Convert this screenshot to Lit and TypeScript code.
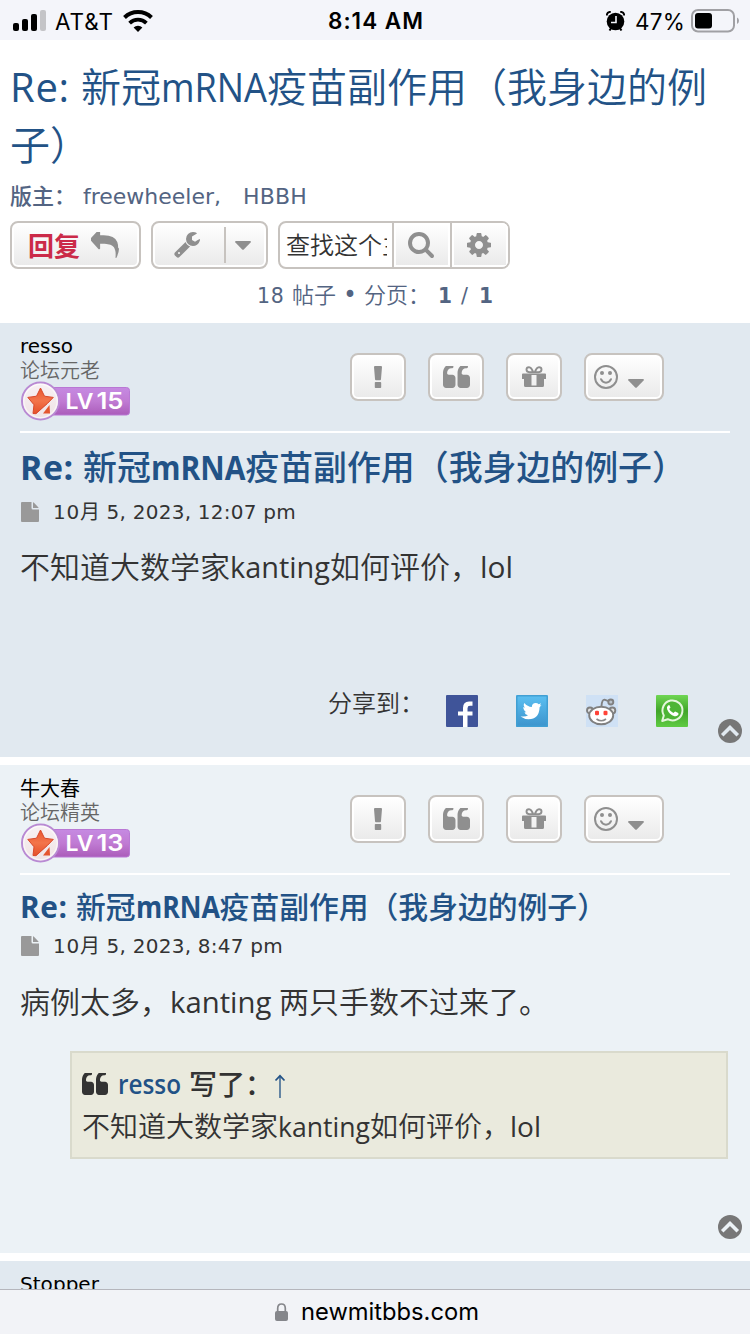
import { LitElement, html, css, svg, nothing } from "lit";
import { customElement, property, query } from "lit/decorators.js";

const QUOTE =
  "M832 960v384q0 80-56 136t-136 56h-384q-80 0-136-56t-56-136v-704q0-104 40.5-198.5t109.5-163.5 163.5-109.5 198.5-40.5h64q26 0 45 19t19 45v128q0 26-19 45t-45 19h-64q-106 0-181 75t-75 181v32q0 40 28 68t68 28h224q80 0 136 56t56 136zm896 0v384q0 80-56 136t-136 56h-384q-80 0-136-56t-56-136v-704q0-104 40.5-198.5t109.5-163.5 163.5-109.5 198.5-40.5h64q26 0 45 19t19 45v128q0 26-19 45t-45 19h-64q-106 0-181 75t-75 181v32q0 40 28 68t68 28h224q80 0 136 56t56 136z";
const GEAR =
  "M1152 896q0-106-75-181t-181-75-181 75-75 181 75 181 181 75 181-75 75-181zm512-109v222q0 12-8 23t-20 13l-185 28q-19 54-39 91 35 50 107 138 10 12 10 25t-9 23q-27 37-99 108t-94 71q-12 0-26-9l-138-108q-44 23-91 38-16 136-29 186-7 28-36 28h-222q-14 0-24.5-8.5t-11.5-21.5l-28-184q-49-16-90-37l-141 107q-10 9-25 9-14 0-25-11-126-114-165-168-7-10-7-23 0-12 8-23 15-21 51-66.5t54-70.5q-27-50-41-99l-183-27q-13-2-21-12.5t-8-23.5v-222q0-12 8-23t19-13l186-28q14-46 39-92-40-57-107-138-10-12-10-24 0-10 9-23 26-36 98.5-107.5t94.5-71.5q13 0 26 10l138 107q44-23 91-38 16-136 29-186 7-28 36-28h222q14 0 24.5 8.5t11.5 21.5l28 184q49 16 90 37l142-107q9-9 24-9 13 0 25 10 129 119 165 170 7 8 7 22 0 12-8 23-15 21-51 66.5t-54 70.5q26 50 41 98l183 28q13 2 21 12.5t8 23.5z";
const SEARCH =
  "M1216 832q0-185-131.5-316.5t-316.5-131.5-316.5 131.5-131.5 316.5 131.5 316.5 316.5 131.5 316.5-131.5 131.5-316.5zm512 832q0 52-38 90t-90 38q-54 0-90-38l-343-342q-179 124-399 124-143 0-273.5-55.5t-225-150-150-225-55.5-273.5 55.5-273.5 150-225 225-150 273.5-55.5 273.5 55.5 225 150 150 225 55.5 273.5q0 220-124 399l343 343q37 37 37 90z";
const WRENCH =
  "M448 1472q0-26-19-45t-45-19-45 19-19 45 19 45 45 19 45-19 19-45zm644-420l-682 682q-37 37-90 37-52 0-91-37l-106-108q-38-36-38-90 0-53 38-91l681-681q39 98 114.5 173.5t173.5 114.5zm634-435q0 39-23 106-47 134-164.5 217.5t-258.5 83.5q-185 0-316.5-131.5t-131.5-316.5 131.5-316.5 316.5-131.5q58 0 121.5 16.5t107.5 46.5q16 11 16 28t-16 28l-293 169v224l193 107q5-3 79-48.5t135.5-81 70.5-35.5q15 0 23.5 10t8.5 25z";
const REPLY =
  "M1792 1120q0 166-127 451-3 7-10.5 24t-13.5 30-13 22q-12 17-28 17-15 0-23.5-10t-8.5-25q0-9 2.5-26.5t2.5-23.5q5-68 5-123 0-112-19.5-200.5t-54-153.5-89-112-113-80-144.5-48-164.5-28.5-186.5-8.5h-224v256q0 26-19 45t-45 19-45-19l-512-512q-19-19-19-45t19-45l512-512q19-19 45-19t45 19 19 45v256h224q713 0 875 403 53 134 53 333z";

const glyph = (d: string, w: number, h: number, box = "0 0 1792 1792") =>
  html`<svg width=${w} height=${h} viewBox=${box} preserveAspectRatio="none" fill="currentColor"><path d=${d} /></svg>`;

const caret = html`<svg width="16" height="9" viewBox="0 0 16 9" fill="currentColor"><path d="M.9 0h14.2q1.2.3.5 1.400L8.800 8.500q-.8.700-1.600 0L.4 1.400Q-.3.300.9 0z" /></svg>`;

/* A stretch of Latin text fitted to a given advance width:
   condensed when it is naturally wider, tracked when it is narrower. */
@customElement("text-run")
class TextRun extends LitElement {
  static styles = css`
    :host { display: inline-block; white-space: pre; }
    .inner { display: inline-block; white-space: pre; transform-origin: 0 50%; }
  `;
  @property({ type: Number }) w = 0;
  @property() text = "";
  @query(".inner") inner!: HTMLElement;
  firstUpdated() {
    const natural = this.inner.getBoundingClientRect().width;
    if (natural > this.w) {
      this.inner.style.transform = `scaleX(${(this.w / natural).toFixed(4)})`;
      this.inner.style.marginRight = `${(this.w - natural).toFixed(3)}px`;
    } else {
      this.inner.style.letterSpacing = `${((this.w - natural) / this.text.length).toFixed(3)}px`;
    }
  }
  render() {
    return html`<span class="inner">${this.text}</span>`;
  }
}

const run = (text: string, w: number) => html`<text-run .text=${text} .w=${w}></text-run>`;

@customElement("level-badge")
class LevelBadge extends LitElement {
  static styles = css`
    :host { display: block; width: 112px; height: 40px; }
    svg { display: block; }
    text { font: 600 23px Inter, "Liberation Sans", sans-serif; }
    .lv { font-size: 22px; font-weight: 600; }
  `;
  @property({ type: Number }) level = 1;
  render() {
    return html`<svg width="112" height="40" viewBox="0 0 112 40">
      <defs>
        <linearGradient id="bar" x2="0" y2="1"><stop offset="0" stop-color="#c68ae2" /><stop offset=".5" stop-color="#c07bd3" /><stop offset="1" stop-color="#ab5cba" /></linearGradient>
        <linearGradient id="star" x2="0" y2="1"><stop offset="0" stop-color="#e9552f" /><stop offset=".5" stop-color="#f3754b" /><stop offset="1" stop-color="#e4502a" /></linearGradient>
        <linearGradient id="disc" x2="0" y2="1"><stop offset="0" stop-color="#f8f1f4" /><stop offset="1" stop-color="#efe3e4" /></linearGradient>
      </defs>
      <rect x="28" y="6.500" width="81.500" height="27.500" rx="3" fill="url(#bar)" stroke="#b978d4" />
      <circle cx="20.500" cy="20" r="18.500" fill="url(#disc)" stroke="#b98ad3" stroke-width="2" />
      <circle cx="20.500" cy="20" r="16.800" fill="none" stroke="#fff" stroke-width="1.500" opacity=".6" />
      <path d="M20.500 7l4 8.200 8.800 1.200-5.800 6-11.500 10.300-3-.200 1-8.700-6.200-7.400 8.700-1.200z" fill="url(#star)" stroke="#d9482a" stroke-width="1" stroke-linejoin="round" />
      <path d="M29.500 24l.5 8.500h-7z" fill="#e4562f" />
      ${svg`<g fill="#fff">
        <text class="lv" x="45.500" y="27.500" textLength="28" lengthAdjust="spacingAndGlyphs">LV</text>
        <text x="76.500" y="28" textLength="27" lengthAdjust="spacingAndGlyphs">${this.level}</text></g>`}
    </svg>`;
  }
}

type Post = {
  author: string;
  authorWidth?: number;
  rank: string;
  level: number;
  headClass: string;
  headRuns: [number, number];
  time: string;
  timeWidth: number;
  body: unknown;
  quoted?: boolean;
  share?: boolean;
};

@customElement("forum-post")
class ForumPost extends LitElement {
  static styles = css`
    :host { display: block; }
    .post { position: relative; box-sizing: border-box; padding: 0 20px; background: #e1e9f0; height: 434px; overflow: hidden; }
    .alt { background: #ecf2f6; height: 488px; }
    .head { display: flex; height: 108px; border-bottom: 2px solid #fff; }
    .who { width: 330px; padding-top: 11px; font: 20px/24px "DejaVu Sans", "Noto Sans CJK SC", sans-serif; color: #000; box-sizing: border-box; }
    .name, .rank { height: 24px; white-space: nowrap; }
    .alt .name { line-height: 26px; }
    .rank { color: #666; font-weight: 350; font-family: "Noto Sans CJK SC", sans-serif; line-height: 24px; }
    level-badge { margin-top: -1px; }
    .tools { display: flex; gap: 22px; padding-top: 30px; }
    .btn { display: flex; align-items: center; justify-content: center; box-sizing: border-box; width: 56px; height: 48px; border: 2px solid #c7c3bf; border-radius: 8px; background: linear-gradient(#fff, #e9e9e9); box-shadow: inset 0 0 0 2px #fff; color: #8f8f8f; }
    .wide { width: 80px; gap: 10px; padding-right: 10px; }
    .low { display: flex; padding-top: 13px; }
    h3 { margin: 9px 0 0; height: 50px; font: 700 33.900px/50px "Open Sans", "Noto Sans CJK SC", sans-serif; color: #225286; white-space: nowrap; }
    .small { margin-top: 10px; height: 44px; line-height: 44px; font-size: 29.800px; }
    .cjk { font-family: "Noto Sans CJK SC", sans-serif; font-weight: 500; line-height: 0; }
    .date { display: flex; align-items: center; height: 30px; margin-top: 5px; gap: 14px; color: #333; font: 20px/30px "DejaVu Sans", "Noto Sans CJK SC", sans-serif; white-space: nowrap; }
    .alt .date { margin-top: 2px; }
    .date svg { color: #999; margin-left: 1px; }
    .body { height: 40px; margin-top: 20px; font: 30px/40px "Open Sans", "Noto Sans CJK SC", sans-serif; font-weight: 450; color: #333; white-space: nowrap; }
    .alt .body { margin-top: 21px; }
    .thin { font-family: "Noto Sans CJK SC", sans-serif; font-weight: 350; line-height: 0; }
    .quote { box-sizing: border-box; margin: 29px -18px 0 50px; width: 658px; height: 108px; padding: 10px 10px; border: 2px solid #d9dacc; background: #eaeadd; color: #333; font: 450 28px/42px "Open Sans", "Noto Sans CJK SC", sans-serif; white-space: nowrap; }
    .cite { display: flex; align-items: center; height: 42px; font-size: 27px; font-weight: 700; }
    .cite .by { margin-left: 10px; color: #225286; font-weight: 600; }
    .cite .wrote { margin-left: 8px; font-size: 28px; line-height: 38px; margin-top: -3px; font-family: "Noto Sans CJK SC", sans-serif; font-weight: 500; }
    .cite .up { margin-left: 1px; margin-top: 4px; color: #4d7399; }
    .share { display: flex; margin: 96px 0 0 308px; height: 44px; font: 24px/38px "Noto Sans CJK SC", sans-serif; font-weight: 350; color: #333; }
    .label { width: 118px; }
    .links { display: flex; gap: 38px; padding-top: 12px; }
    .top { position: absolute; right: 8px; bottom: 14px; width: 24px; height: 24px; }
    svg { display: block; }
  `;
  @property({ attribute: false }) post!: Post;

  private shareIcons() {
    return html`<div class="links">
      <svg width="32" height="32" viewBox="0 0 32 32"><rect width="32" height="32" rx="1" fill="#3f5499" /><path d="M17 32V20.500H12V16.500h5V13q0-6.500 6-6.500h3.500v4.300H24q-2.500 0-2.500 2.400v3.300h5v4h-5V32z" fill="#fff" /></svg>
      <svg width="32" height="32" viewBox="0 0 32 32"><defs><linearGradient id="tw" x2="0" y2="1"><stop stop-color="#5cc0f2" /><stop offset="1" stop-color="#3c93cc" /></linearGradient></defs><rect width="32" height="32" rx="1" fill="url(#tw)" /><rect x=".75" y=".75" width="30.500" height="30.500" rx="1" fill="none" stroke="#419fd3" stroke-width="1.500" /><path d="M6.500 21.500q3.500.200 5.500-1.300-3-.700-3.500-3h1.800Q7.300 15.500 7.300 12l1.700.7Q6.800 10.500 8.400 8q3 3.700 7.400 4 .2-4 3.900-4 1.900 0 3 1.200l2.400-.9-1.300 2.200 1.700-.4-1.900 2.200q-.5 12-11 12-4 0-8.100-2.800z" fill="#fff" /></svg>
      <svg width="32" height="32" viewBox="0 0 32 32"><rect width="32" height="32" fill="#cfe1f5" /><g stroke="#808080" stroke-width="1.900" fill="#e4e4e4"><circle cx="4" cy="15.500" r="3" /><circle cx="26.300" cy="15.500" r="3" /><path d="M15.500 11q.5-6.500 3-6.400l4 1.600" fill="none" /><circle cx="24.800" cy="7" r="2.500" fill="#b9c2cc" /><ellipse cx="15.200" cy="20.500" rx="12" ry="8.800" fill="#fff" /></g><rect x="9" y="15.800" width="4" height="4.400" rx="1.300" fill="#ff4338" /><rect x="17.500" y="15.800" width="4" height="4.400" rx="1.300" fill="#ff4338" /><path d="M10.500 24q4.700 3.500 9.500 0" stroke="#888" stroke-width="1.700" fill="none" /></svg>
      <svg width="32" height="32" viewBox="0 0 32 32"><defs><linearGradient id="wa" x2="0" y2="1"><stop stop-color="#6fd653" /><stop offset=".5" stop-color="#41a529" /><stop offset="1" stop-color="#5fcb43" /></linearGradient></defs><rect width="32" height="32" rx="1" fill="url(#wa)" /><path d="M6.200 26l1.600-5.600a10 10 0 1 1 3.900 3.800z" fill="#4db535" stroke="#e4f6dc" stroke-width="2" stroke-linejoin="round" /><path d="M12 10.500q-1.700 1.500-.8 4 2 5 7.300 6.700 2.600.6 4-1.700l-.2-1.500-3.200-1.500-1.700 1.600q-3-1.300-4.200-4.100l1.300-1.400-1.200-2.600z" fill="#fff" /></svg>
    </div>`;
  }

  render() {
    const p = this.post;
    return html`<article class="post ${p.quoted ? "alt" : ""}">
      <header class="head">
        <div class="who">
          <div class="name">${p.authorWidth ? run(p.author, p.authorWidth) : p.author}</div>
          <div class="rank">${p.rank}</div>
          <level-badge .level=${p.level}></level-badge>
        </div>
        <div class="tools">
          <span class="btn"><svg width="8" height="24" viewBox="0 0 8 24" fill="currentColor"><path d="M1 1h6q1 0 1 1l-1 12q0 1.200-1 1.200H2q-1 0-1-1.200L0 2q0-1 1-1zM1.600 17h4.800q.8 0 .8.800v4.400q0 .8-.8.800H1.600q-.8 0-.8-.8v-4.400q0-.8.800-.8z" /></svg></span>
          <span class="btn">${glyph(QUOTE, 27, 22, "64 256 1664 1280")}</span>
          <span class="btn"><svg width="24" height="22" viewBox="0 0 24 22" fill="currentColor"><path fill-rule="evenodd" d="M0 8.500q0-1 1-1h22q1 0 1 1V13h-2v6.500q0 1.500-1.500 1.500h-17Q2 21 2 19.500V13H0zM9.500 9v10.500h5V9z" /><path d="M11.500 7Q9.500 1.200 7 1.200q-2.500 0-2.500 2.400Q4.500 6.200 7.500 6.300h9q3-.1 3-2.700 0-2.400-2.500-2.400-2.500 0-4.500 5.800" fill="none" stroke="currentColor" stroke-width="1.900" /></svg></span>
          <span class="btn wide">
            <svg width="24" height="24" viewBox="0 0 24 24" fill="none" stroke="currentColor" stroke-width="2"><circle cx="12" cy="12" r="11" /><circle cx="8" cy="8" r="2" fill="currentColor" stroke="none" /><circle cx="16" cy="8" r="2" fill="currentColor" stroke="none" /><path d="M7 14.200q1.500 3.500 5 3.500t5-3.500" stroke-linecap="round" /></svg>
            <span class="low">${caret}</span>
          </span>
        </div>
      </header>
      <h3 class=${p.headClass}>${run("Re: ", p.headRuns[0])}<span class="cjk">新冠</span>${run("mRNA", p.headRuns[1])}<span class="cjk">疫苗副作用（我身边的例子）</span></h3>
      <div class="date"><svg width="18" height="20" viewBox="0 0 18 20" fill="currentColor"><path d="M1 0h9.500v6q0 1.500 1.500 1.500h6V19q0 1-1 1H1q-1 0-1-1V1Q0 0 1 0zM12 .3q.7.200 1.200.7l3.800 3.900q.5.500.600 1.100H12z" /></svg><span>${run("10", 27)}月${run(p.time, p.timeWidth)}</span></div>
      <div class="body">${p.body}</div>
      ${p.quoted
        ? html`<blockquote class="quote">
            <div class="cite">${glyph(QUOTE, 26, 22, "64 256 1664 1280")}<span class="by">${run("resso", 63)}</span><span class="wrote">写了：</span><span class="up"><svg width="12" height="24" viewBox="0 0 12 24" fill="none" stroke="currentColor" stroke-width="1.700"><path d="M6 24V2" /><path d="M1.500 6.500L6 1.800l4.500 4.700" stroke="#225286" /></svg></span></div>
            <div><span class="thin">不知道大数学家</span>${run("kanting", 92)}<span class="thin">如何评价，</span>${run("lol", 31)}</div>
          </blockquote>`
        : nothing}
      ${p.share ? html`<div class="share"><span class="label">分享到：</span>${this.shareIcons()}</div>` : nothing}
      <svg class="top" viewBox="0 0 24 24"><circle cx="12" cy="12" r="12" fill="#777" /><path d="M5.500 15L12 8.500l6.500 6.500" fill="none" stroke=${p.quoted ? "#ecf2f6" : "#e1e9f0"} stroke-width="3.600" stroke-linecap="square" /></svg>
    </article>`;
  }
}

@customElement("app-root")
class AppRoot extends LitElement {
  static styles = css`
    :host { display: flex; flex-direction: column; width: 750px; height: 1334px; overflow: hidden; background: #fff; }
    svg { display: block; }
    .status { display: grid; grid-template-columns: 1fr auto 1fr; align-items: center; height: 40px; flex: none; background: #f4f5fa; color: #000; font: 22.500px/40px Inter, sans-serif; white-space: nowrap; }
    .status text-run { padding-top: 1px; height: 39px; }
    .left { display: flex; align-items: center; padding-left: 13px; gap: 9px; }
    .clock { font-weight: 600; padding-left: 2px; }
    .right { display: flex; align-items: center; justify-content: flex-end; padding-right: 11px; gap: 6px; }
    .alarm { margin-right: 4px; }
    .page { flex: 1; min-height: 0; overflow: hidden; }
    .intro { height: 283px; }
    h2 { box-sizing: border-box; margin: 0; padding: 18px 0 0 10px; height: 135px; font: 500 40px/58px "Open Sans", "Noto Sans CJK SC", sans-serif; color: #225286; }
    .cjk { font-family: "Noto Sans CJK SC", sans-serif; font-weight: 350; line-height: 0; }
    .mods { display: flex; height: 30px; margin: 6px 0 10px 10px; font: 22px/31px "DejaVu Sans", "Noto Sans CJK SC", sans-serif; color: #536482; white-space: nowrap; }
    .mods b { width: 73px; font-family: "Noto Sans CJK SC", sans-serif; font-weight: 500; line-height: 26px; }
    .bar { display: flex; gap: 10px; padding-left: 10px; }
    .btn { display: flex; align-items: center; box-sizing: border-box; height: 48px; border: 2px solid #c7c3bf; border-radius: 8px; background: linear-gradient(#fff, #e9e9e9); box-shadow: inset 0 0 0 2px #fff; color: #8f8f8f; }
    .reply { width: 131px; padding-left: 16px; gap: 11px; color: #cb2a48; font: 700 26px/42px "Noto Sans CJK SC", sans-serif; }
    .reply svg { color: #8f8f8f; }
    .wrench { width: 117px; padding-left: 21px; }
    .divider { width: 2px; height: 36px; margin: 0 9px 0 24px; background: #c7c3bf; }
    .search { display: flex; box-sizing: border-box; width: 232px; height: 48px; border: 2px solid #c7c3bf; border-radius: 8px; overflow: hidden; color: #8f8f8f; }
    .field { width: 112px; box-sizing: border-box; padding: 0 6px 0 6px; font: 24px/42px "Noto Sans CJK SC", sans-serif; font-weight: 350; color: #333; white-space: nowrap; }
    .clip { overflow: hidden; width: 101px; }
    .cell { display: flex; align-items: center; justify-content: center; box-sizing: border-box; width: 58px; padding-right: 2px; border-left: 2px solid #c7c3bf; background: linear-gradient(#fff, #e9e9e9); box-shadow: inset 0 0 0 2px #fff; }
    .pages { display: flex; height: 26px; margin-top: 13px; padding-left: 257px; font: 20.500px/28px "DejaVu Sans", "Noto Sans CJK SC", sans-serif; color: #536482; white-space: nowrap; }
    .pages .zh { font-family: "Noto Sans CJK SC", sans-serif; font-size: 22px; font-weight: 350; line-height: 23px; }
    .pages .dot { font-size: 24px; line-height: 26px; }
    .posts { display: flex; flex-direction: column; gap: 8px; }
    .next { height: 28px; overflow: hidden; background: #e1e9f0; padding: 11px 20px 0; box-sizing: border-box; font: 20px/24px "DejaVu Sans", sans-serif; color: #000; }
    .address { display: flex; align-items: center; justify-content: center; gap: 13px; flex: none; box-sizing: border-box; height: 45px; padding-left: 3px; border-top: 1px solid #b5b6bc; background: #f2f3f7; color: #000; font: 24px/44px Inter, sans-serif; }
  `;

  private posts: Post[] = [
    {
      author: "resso", authorWidth: 53, rank: "论坛元老", level: 15,
      headClass: "", headRuns: [63, 94.5], time: " 5, 2023, 12:07 pm", timeWidth: 196,
      body: html`<span class="thin">不知道大数学家</span>${run("kanting", 100)}<span class="thin">如何评价，</span>${run("lol", 33)}`,
      share: true,
    },
    {
      author: "牛大春", rank: "论坛精英", level: 13,
      headClass: "small", headRuns: [56, 84], time: " 5, 2023, 8:47 pm", timeWidth: 183,
      body: html`<span class="thin">病例太多，</span>${run("kanting ", 109)}<span class="thin">两只手数不过来了。</span>`,
      quoted: true,
    },
  ];

  render() {
    return html`
      <div class="status">
        <div class="left">
          <svg width="33" height="21" viewBox="0 0 33 21"><rect y="13" width="6" height="8" rx="2" /><rect x="9" y="9" width="6" height="12" rx="2" /><rect x="18" y="4" width="6" height="17" rx="2" /><rect x="27" width="6" height="21" rx="2" fill="#c4c4c7" /></svg>
          ${run("AT&T", 59)}
          <svg width="30" height="22" viewBox="0 0 30 22" fill="none" stroke="#000" stroke-width="4"><path d="M1.500 7.500a19.500 19.500 0 0 1 27 0" /><path d="M6.600 13.100a12 12 0 0 1 16.800 0" stroke-width="3.800" /><path d="M15 22l-4.400-4.600a6.500 6.500 0 0 1 8.800 0z" fill="#000" stroke="none" /></svg>
        </div>
        <div class="clock">${run("8:14 AM", 96)}</div>
        <div class="right">
          <svg class="alarm" width="19" height="20" viewBox="0 0 19 20"><circle cx="9.500" cy="10.500" r="8.800" /><path d="M3.500 19.500l2-3M15.500 19.500l-2-3" stroke="#000" stroke-width="2" /><path d="M.8 4.500Q.8 1 4.800.8M18.200 4.500Q18.200 1 14.200.8" fill="none" stroke="#000" stroke-width="2" /><path d="M10 5v6.500H5" fill="none" stroke="#f4f5fa" stroke-width="1.600" /></svg>
          ${run("47%", 50)}
          <svg width="48" height="24" viewBox="0 0 48 24"><rect x="1" y="1" width="42" height="21.500" rx="6" fill="none" stroke="#a0a0a4" stroke-width="2" /><rect x="4" y="4" width="17" height="15.500" rx="3" /><path d="M46 8.500q2 1 2 3.200t-2 3.300z" fill="#a0a0a4" /></svg>
        </div>
      </div>
      <div class="page">
        <div class="intro">
          <h2>${run("Re: ", 71)}<span class="cjk">新冠</span>${run("mRNA", 106)}<span class="cjk">疫苗副作用（我身边的例<br />子）</span></h2>
          <div class="mods"><b>版主：</b>${run("freewheeler", 131)}${run(",", 29)}${run("HBBH", 64)}</div>
          <div class="bar">
            <div class="btn reply">回复${glyph(REPLY, 28, 26, "0 128 1792 1536")}</div>
            <div class="btn wrench">${glyph(WRENCH, 26, 26, "64 128 1664 1664")}<span class="divider"></span>${caret}</div>
            <div class="search">
              <div class="field"><div class="clip">查找这个主题</div></div>
              <div class="cell">${glyph(SEARCH, 26, 26, "64 128 1664 1664")}</div>
              <div class="cell">${glyph(GEAR, 24, 24, "128 128 1536 1536")}</div>
            </div>
          </div>
          <div class="pages">${run("18 ", 35)}<span class="zh">帖子</span><span class="dot">${run(" • ", 28)}</span><span class="zh">分页：</span>${run(" ", 8)}<b>${run("1", 14)}</b>${run(" / ", 27)}<b>${run("1", 14)}</b></div>
        </div>
        <div class="posts">
          ${this.posts.map((p) => html`<forum-post .post=${p}></forum-post>`)}
          <div class="next">${run("Stopper", 79)}</div>
        </div>
      </div>
      <div class="address"><svg width="13" height="18" viewBox="0 0 13 18"><rect y="8" width="13" height="10" rx="2" fill="#85868b" /><path d="M2.700 8.500V5.300Q2.700 1 6.500 1t3.800 4.300v3.200" fill="none" stroke="#85868b" stroke-width="1.700" /></svg>${run("newmitbbs.com", 178)}</div>
    `;
  }
}
